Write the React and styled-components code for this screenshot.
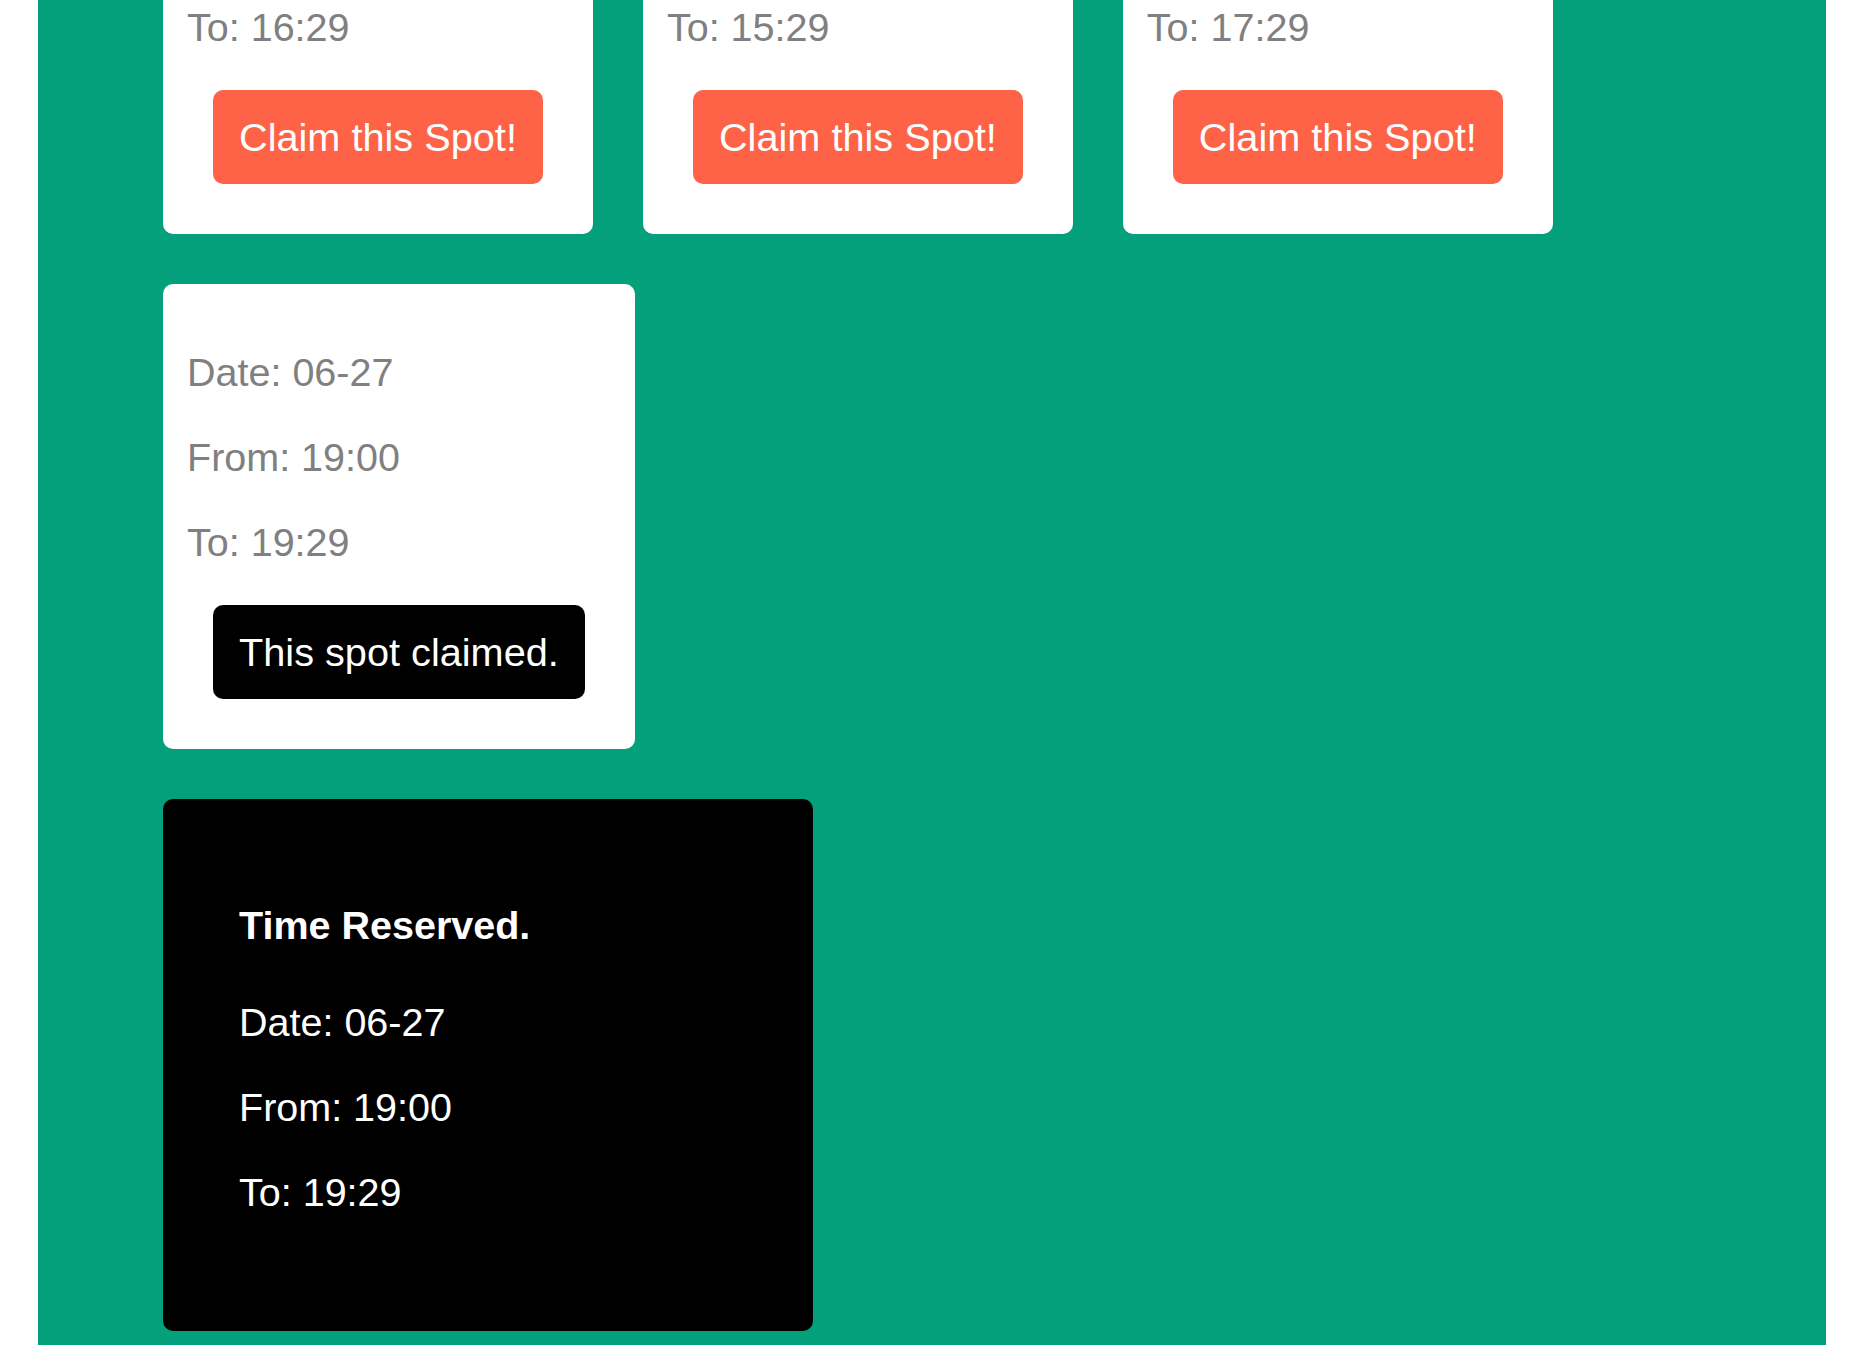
import styled, { createGlobalStyle } from 'styled-components';

const SLOTS = [
  { id: 1, date: '06-27', from: '16:00', to: '16:29', claimed: false },
  { id: 2, date: '06-27', from: '15:00', to: '15:29', claimed: false },
  { id: 3, date: '06-27', from: '17:00', to: '17:29', claimed: false },
  { id: 4, date: '06-27', from: '19:00', to: '19:29', claimed: true },
];

const RESERVED = { date: '06-27', from: '19:00', to: '19:29' };

const App = () => {
  return (
    <>
      <GlobalStyle />
      <S.Board>
        <S.SlotList>
          {SLOTS.map((slot) => (
            <S.Card key={slot.id}>
              <S.Line>Date: {slot.date}</S.Line>
              <S.Line>From: {slot.from}</S.Line>
              <S.Line>To: {slot.to}</S.Line>
              <S.Button type="button" $claimed={slot.claimed}>
                {slot.claimed ? 'This spot claimed.' : 'Claim this Spot!'}
              </S.Button>
            </S.Card>
          ))}
        </S.SlotList>
        <S.Reserved>
          <S.ReservedTitle>Time Reserved.</S.ReservedTitle>
          <S.Line $light>Date: {RESERVED.date}</S.Line>
          <S.Line $light>From: {RESERVED.from}</S.Line>
          <S.Line $light>To: {RESERVED.to}</S.Line>
        </S.Reserved>
      </S.Board>
    </>
  );
};

export default App;

const GlobalStyle = createGlobalStyle`
  html, body {
    margin: 0;
    padding: 0;
    overflow: hidden;
    background: #ffffff;
    font-family: 'Liberation Sans', Arial, sans-serif;
  }
`;

const S = {
  // page is shown scrolled down: the top of the board sits above the window
  Board: styled.main`
    margin: -281px 48px 0 38px;
    padding: 50px 125px 24px;
    background-color: #03a07b;
    display: flex;
    flex-direction: column;
    align-items: flex-start;
    gap: 50px;
  `,
  SlotList: styled.div`
    display: flex;
    flex-wrap: wrap;
    align-items: flex-start;
    gap: 50px;
  `,
  Card: styled.div`
    background-color: #ffffff;
    border-radius: 10px;
    padding: 26px 24px 24px;
  `,
  Line: styled.p`
    margin: 40px 0;
    font-size: 39.5px;
    line-height: 45px;
    color: ${({ $light }) => ($light ? '#ffffff' : '#808080')};
    white-space: nowrap;
  `,
  Button: styled.button`
    display: block;
    margin: 0 26px 26px;
    padding: 24px 26px;
    border: none;
    border-radius: 10px;
    font-family: 'Liberation Sans', Arial, sans-serif;
    font-size: 39.7px;
    line-height: 46px;
    color: #ffffff;
    background-color: ${({ $claimed }) => ($claimed ? '#000000' : '#ff6347')};
    white-space: nowrap;
    cursor: pointer;
  `,
  Reserved: styled.section`
    width: 650px;
    box-sizing: border-box;
    padding: 64px 76px 76px;
    background-color: #000000;
    border-radius: 10px;
  `,
  ReservedTitle: styled.h2`
    margin: 40px 0 52px;
    font-size: 39.5px;
    line-height: 45px;
    font-weight: 700;
    color: #ffffff;
  `,
};
